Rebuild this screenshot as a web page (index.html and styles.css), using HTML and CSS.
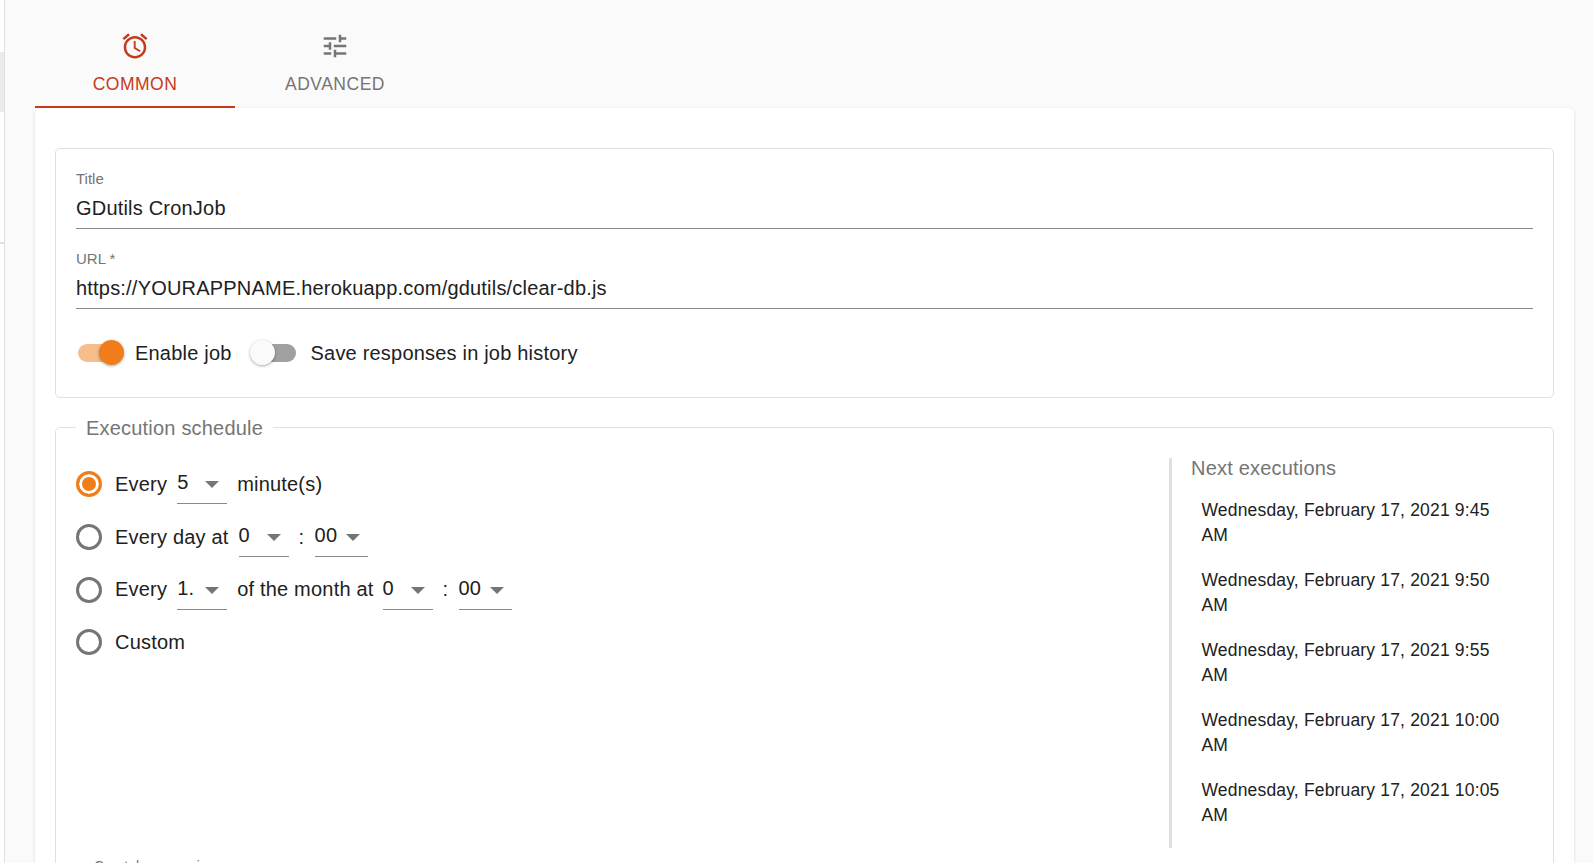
FILE: index.html
```html
<!DOCTYPE html>
<html lang="en">
<head>
<meta charset="utf-8">
<title>GDutils CronJob</title>
<link rel="stylesheet" href="styles.css">
</head>
<body>
<div class="page">
  <aside class="strip">
    <div class="strip-item"></div>
    <div class="strip-line"></div>
  </aside>
  <main class="main">
    <nav class="tabs">
      <div class="tab tab-active">
        <svg class="tab-icon" viewBox="0 0 24 24"><path d="M22 5.72l-4.6-3.86-1.29 1.53 4.6 3.86L22 5.72zM7.88 3.39L6.6 1.86 2 5.71l1.29 1.53 4.59-3.85zM12.5 8H11v6l4.75 2.85.75-1.23-4-2.37V8zM12 4c-4.97 0-9 4.03-9 9s4.03 9 9 9 9-4.03 9-9-4.03-9-9-9zm0 16c-3.87 0-7-3.13-7-7s3.13-7 7-7 7 3.13 7 7-3.13 7-7 7z"/></svg>
        <span>COMMON</span>
      </div>
      <div class="tab">
        <svg class="tab-icon" viewBox="0 0 24 24"><path d="M3 17v2h6v-2H3zM3 5v2h10V5H3zm10 16v-2h8v-2h-8v-2h-2v6h2zM7 9v2H3v2h4v2h2V9H7zm14 4v-2H11v2h10zm-6-4h2V7h4V5h-4V3h-2v6z"/></svg>
        <span>ADVANCED</span>
      </div>
    </nav>
    <section class="card">
      <div class="box">
        <div class="field">
          <label class="field-label">Title</label>
          <div class="field-value">GDutils CronJob</div>
        </div>
        <div class="field">
          <label class="field-label">URL *</label>
          <div class="field-value">https://YOURAPPNAME.herokuapp.com/gdutils/clear-db.js</div>
        </div>
        <div class="switches">
          <div class="switch switch-on"><span class="knob"></span></div>
          <span class="switch-text">Enable job</span>
          <div class="switch"><span class="knob"></span></div>
          <span class="switch-text">Save responses in job history</span>
        </div>
      </div>
      <fieldset class="schedule">
        <legend class="legend">Execution schedule</legend>
        <div class="schedule-body">
          <div class="options">
            <div class="option">
              <span class="radio radio-on"></span>
              <span class="opt-text">Every</span>
              <span class="select s50"><span>5</span><i class="caret"></i></span>
              <span class="opt-text">minute(s)</span>
            </div>
            <div class="option">
              <span class="radio"></span>
              <span class="opt-text">Every day at</span>
              <span class="select s50"><span>0</span><i class="caret"></i></span>
              <span class="colon">:</span>
              <span class="select s53"><span>00</span><i class="caret"></i></span>
            </div>
            <div class="option">
              <span class="radio"></span>
              <span class="opt-text">Every</span>
              <span class="select s50"><span>1.</span><i class="caret"></i></span>
              <span class="opt-text opt-tight">of the month at</span>
              <span class="select s50"><span>0</span><i class="caret"></i></span>
              <span class="colon">:</span>
              <span class="select s53"><span>00</span><i class="caret"></i></span>
            </div>
            <div class="option">
              <span class="radio"></span>
              <span class="opt-text">Custom</span>
            </div>
          </div>
          <aside class="next">
            <h3 class="next-title">Next executions</h3>
            <ul class="next-list">
              <li>Wednesday, February 17, 2021 9:45 AM</li>
              <li>Wednesday, February 17, 2021 9:50 AM</li>
              <li>Wednesday, February 17, 2021 9:55 AM</li>
              <li>Wednesday, February 17, 2021 10:00 AM</li>
              <li>Wednesday, February 17, 2021 10:05 AM</li>
            </ul>
          </aside>
        </div>
        <div class="crontab-label">Crontab expression</div>
      </fieldset>
    </section>
  </main>
</div>
</body>
</html>
```
FILE: styles.css
```css
* { box-sizing: border-box; }
html, body { margin: 0; height: 100%; overflow: hidden; }
body {
  background: #fafafa;
  color: #212121;
  font-family: "Liberation Sans", Arial, sans-serif;
  font-size: 20px;
  letter-spacing: 0.2px;
}
.page { display: flex; height: 863px; overflow: hidden; }

.strip {
  width: 5px;
  flex: none;
  background: #fff;
  border-right: 1px solid #e0e0e0;
  padding-top: 52px;
}
.strip-item { height: 60px; background: #ebebeb; }
.strip-line { height: 2px; margin-top: 130px; background: #e0e0e0; }

.main { flex: 1; min-width: 0; padding: 0 19px 0 30px; }

.tabs { display: flex; height: 108px; }
.tab {
  width: 200px;
  padding-top: 31px;
  display: flex;
  flex-direction: column;
  align-items: center;
  gap: 13px;
  color: #757575;
  fill: #757575;
  font-size: 17.5px;
  line-height: 20px;
  letter-spacing: 0.5px;
}
.tab-active {
  color: #c63a1b;
  fill: #c63a1b;
  border-bottom: 2px solid #c63a1b;
}
.tab-icon { width: 30px; height: 30px; display: block; }

.card {
  background: #fff;
  border-radius: 5px;
  box-shadow: 0 1px 3px rgba(0,0,0,.14);
  padding: 40px 20px 0;
  height: 800px;
}
.box {
  height: 250px;
  border: 1px solid #e0e0e0;
  border-radius: 5px;
  padding: 21px 20px 0;
}
.field { height: 80px; }
.field-label {
  display: block;
  color: #757575;
  font-size: 15px;
  line-height: 17px;
  letter-spacing: 0;
}
.field-value {
  height: 42px;
  padding-top: 9px;
  line-height: 24px;
  border-bottom: 1px solid #8a8a8a;
}
.switches {
  display: flex;
  align-items: center;
  height: 30px;
  margin-top: 8px;
}
.switch {
  position: relative;
  width: 42px;
  height: 18px;
  margin-left: 22px;
  margin-right: 15px;
  border-radius: 9px;
  background: #a0a0a0;
}
.switch-on { width: 43px; background: #f7bd8b; margin-left: 2px; margin-right: 14px; }
.knob {
  position: absolute;
  top: -4px;
  left: -4px;
  width: 25px;
  height: 25px;
  border-radius: 50%;
  background: #fafafa;
  box-shadow: 0 1px 3px rgba(0,0,0,.35);
}
.switch-on .knob { left: 21px; background: #f07d19; }
.switch-text { line-height: 24px; }

.schedule {
  margin: 16px 0 0;
  padding: 0 20px;
  height: 501px;
  border: 1px solid #e0e0e0;
  border-radius: 5px;
  min-width: 0;
}
.legend {
  margin-left: 0;
  padding: 2px 10px 0;
  color: #757575;
  line-height: 24px;
}
.schedule-body { display: flex; margin-top: 18px; height: 390px; }
.options { flex: 1; padding-top: 0; }
.option {
  display: flex;
  align-items: center;
  height: 52.7px;
}
.radio {
  flex: none;
  width: 26px;
  height: 26px;
  margin-right: 13px;
  border: 3px solid #757575;
  border-radius: 50%;
}
.radio-on {
  border-color: #f07d19;
  background: #f07d19;
  box-shadow: inset 0 0 0 3px #fff;
}
.opt-text { margin-right: 10px; white-space: nowrap; }
.opt-tight { margin-right: 9px; }
.colon { width: 8px; margin-right: 8px; text-align: left; }
.select {
  position: relative;
  display: block;
  height: 40px;
  padding-top: 6px;
  line-height: 24px;
  margin-right: 10px;
  border-bottom: 1px solid #8a8a8a;
}
.s50 { width: 50px; }
.s53 { width: 53px; margin-right: 0; }
.caret {
  position: absolute;
  right: 8px;
  top: 17px;
  border-left: 7px solid transparent;
  border-right: 7px solid transparent;
  border-top: 7px solid #757575;
}
.next {
  width: 364px;
  flex: none;
  border-left: 3px solid #e0e0e0;
  padding-left: 19px;
}
.next-title {
  margin: 0;
  color: #757575;
  font-size: 20px;
  font-weight: 400;
  line-height: 20px;
}
.next-list {
  list-style: none;
  margin: 0;
  padding: 20px 25px 0 10.5px;
  font-size: 17.5px;
  line-height: 25px;
  letter-spacing: 0.17px;
}
.next-list li { margin-bottom: 20px; }
.crontab-label { margin-top: 10px; margin-left: 18px; font-size: 14px; line-height: 16px; letter-spacing: 0; color: #757575; }
```
